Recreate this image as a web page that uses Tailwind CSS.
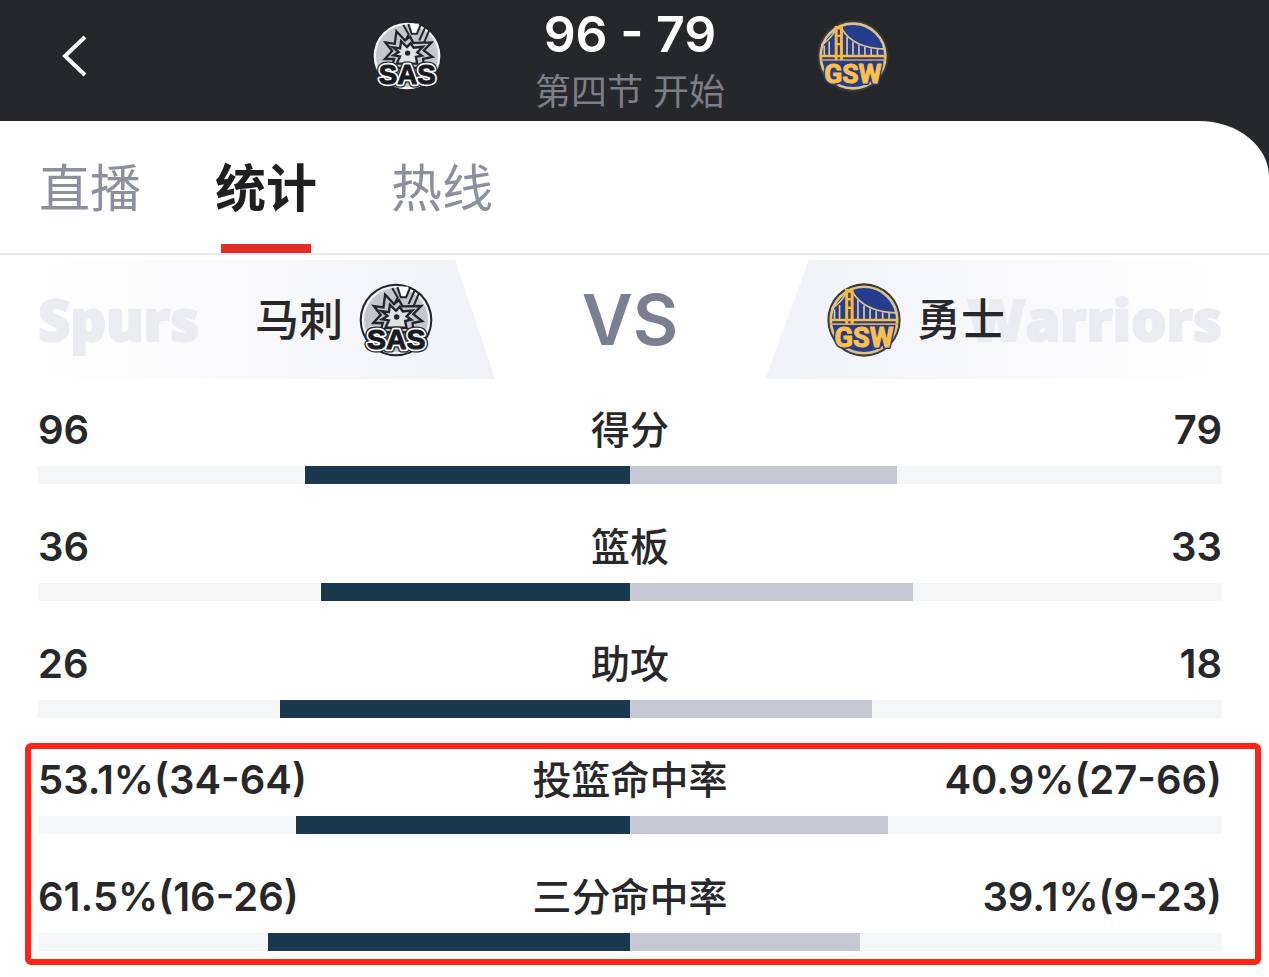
<!DOCTYPE html>
<html lang="zh-CN">
<head>
    <meta charset="UTF-8">
    <meta name="viewport" content="width=device-width, initial-scale=1.0">
    <title>马刺 96 - 79 勇士</title>
    <script src="https://cdn.jsdelivr.net/npm/@tailwindcss/browser@4"></script>
</head>
<body class="bg-white text-[#28282a] font-['Inter','Noto_Sans_CJK_SC',sans-serif]">

    <!-- Logo sprites -->
    <svg class="hidden" aria-hidden="true">
        <symbol id="logo-sas" viewBox="0 0 218 218">
            <circle cx="109" cy="109" r="107" fill="#22252c"/>
            <circle cx="109" cy="109" r="101" fill="#f4f5f6"/>
            <circle cx="109" cy="109" r="94" fill="#c3c6ca"/>
            <!-- fork -->
            <path d="M119 10 L124 38 L138 38 L146 11 Z" fill="#fff"/>
            <path d="M98 15 L114 43 L106 58 M113 12 L123 42 L139 42 L151 13 M165 20 L146 62 M177 29 L160 70" fill="none" stroke="#22252c" stroke-width="6"/>
            <!-- star -->
            <path d="M44 68 L72 72 L77 34 L103 62 L118 50 L128 69 L183 68 L160 92 L186 112 L158 118 L160 145 L62 145 L70 118 L42 118 L64 94 Z" fill="#c3c6ca" stroke="#22252c" stroke-width="7"/>
            <path d="M67 83 L88 86 L91 64 L109 82 L120 70 L129 84 L157 81 L140 98 L154 108 L136 112 L140 132 L78 132 L88 110 L68 107 L84 97 Z" fill="#e2e3e5" stroke="#22252c" stroke-width="7"/>
            <circle cx="111" cy="100" r="8" fill="#22252c"/>
            <g font-family="Liberation Sans" font-weight="700" font-size="84" text-anchor="middle" stroke-linejoin="round">
                <text x="110" y="194" fill="#22252c" stroke="#22252c" stroke-width="21">SAS</text>
                <text x="110" y="194" fill="#171a22" stroke="#fff" stroke-width="13">SAS</text>
                <text x="110" y="194" fill="#171a22" stroke="#171a22" stroke-width="3">SAS</text>
            </g>
        </symbol>
        <symbol id="logo-gsw" viewBox="0 0 218 218">
            <circle cx="109" cy="109" r="108" fill="#37393f"/>
            <circle cx="109" cy="109" r="98" fill="#263c8c" stroke="#dcc486" stroke-width="8"/>
            <!-- bridge cables and hangers -->
            <g fill="none" stroke="#dcc992" stroke-width="5">
                <path d="M75 26 Q109 85 205 88"/>
                <path d="M57 28 Q43 57 13 76"/>
                <path d="M22 78 V106 M37 65 V106 M91 50 V106 M109 66 V106 M127 75 V106 M145 82 V106 M164 86 V106 M183 88 V106"/>
            </g>
            <path d="M9 109 H209" stroke="#f5bd43" stroke-width="7"/>
            <path d="M9 121 H209" stroke="#d9a957" stroke-width="5"/>
            <path d="M58 18 V121 M74 18 V121" stroke="#fbb936" stroke-width="9"/>
            <path d="M58 25 H74 M58 48 H74 M58 73 H74" stroke="#fbb936" stroke-width="7"/>
            <g font-family="Liberation Sans Narrow, Roboto" font-weight="700" font-size="80" text-anchor="middle" stroke-linejoin="round">
                <text x="109" y="190" fill="#263c8c" stroke="#263c8c" stroke-width="12">GSW</text>
                <text x="109" y="190" fill="#ffc04a" stroke="#ffc04a" stroke-width="3">GSW</text>
            </g>
        </symbol>
    </svg>

    <!-- Score header -->
    <div class="bg-[#26272b]">
        <header class="grid grid-cols-[1fr_374px_1fr] items-center pl-[38px] pr-[47px] pt-[5px]">
            <div class="flex items-center justify-between pb-[14px]">
                <button type="button" aria-label="返回" class="p-4 text-white">
                    <svg class="w-10 h-12" viewBox="0 0 40 48" fill="none" stroke="currentColor" stroke-width="4">
                        <path d="M31 5 L11 24 L31 43"/>
                    </svg>
                </button>
                <svg class="size-[72px]" role="img" aria-label="SAS"><use href="#logo-sas"/></svg>
            </div>
            <div class="text-center">
                <h1 class="text-[50px] leading-[58px] font-semibold text-white">96 - 79</h1>
                <p class="text-[36px] leading-[58px] text-[#7d7e88]">第四节 开始</p>
            </div>
            <div class="pb-[14px]">
                <svg class="size-[72px]" role="img" aria-label="GSW"><use href="#logo-gsw"/></svg>
            </div>
        </header>

        <!-- Tabs -->
        <nav class="flex gap-[74px] h-[134px] px-[39px] bg-white border-b-2 border-[#e9e9ea] rounded-tr-[70px_56px] text-[51px] leading-[136px] text-[#8c8f9e]">
            <a href="#live">直播</a>
            <a href="#stats" class="relative font-bold text-[#1f1f21]" aria-current="page">
                统计
                <span class="absolute bottom-0 inset-x-[6px] h-[9px] bg-[#e52b26]"></span>
            </a>
            <a href="#hotline">热线</a>
        </nav>
    </div>

    <main id="stats">
        <!-- Teams -->
        <section class="grid grid-cols-[1fr_270px_1fr] items-center pl-[38px] pr-[47px] pt-[5px] text-[44px] font-medium">
            <div class="relative flex items-center justify-end gap-4 h-[119px] pr-[62px] bg-linear-to-r from-white to-[#f1f2f7] [clip-path:polygon(0_0,calc(100%-40px)_0,100%_100%,0_100%)]">
                <span class="absolute left-0 top-[21px] font-['Open_Sans'] font-extrabold text-[56px] leading-[76px] text-[#ebecf2] [-webkit-text-stroke:2px_#ebecf2]">Spurs</span>
                <span class="relative">马刺</span>
                <svg class="relative size-[74px]" role="img" aria-label="SAS"><use href="#logo-sas"/></svg>
            </div>
            <div class="text-center text-[70px] leading-[119px] font-semibold text-[#7c7f93]">VS</div>
            <div class="relative flex items-center gap-4 h-[119px] pl-[62px] bg-linear-to-l from-white to-[#f1f2f7] [clip-path:polygon(44px_0,100%_0,100%_100%,0_100%)]">
                <span class="absolute right-0 top-[21px] font-['Open_Sans'] font-extrabold text-[56px] leading-[76px] text-[#ebecf2] [-webkit-text-stroke:2px_#ebecf2]">Warriors</span>
                <svg class="relative size-[74px]" role="img" aria-label="GSW"><use href="#logo-gsw"/></svg>
                <span class="relative">勇士</span>
            </div>
        </section>

        <!-- Team stats -->
        <section class="flex flex-col gap-[34px] pl-[38px] pr-[47px] pt-[22px] text-[40px] leading-[58px] font-semibold">
            <div>
                <div class="grid grid-cols-[1fr_auto_1fr]">
                    <span>96</span>
                    <span class="text-[39px] font-medium">得分</span>
                    <span class="text-right">79</span>
                </div>
                <div class="grid grid-cols-2 h-[18px] mt-[7px] bg-[#f5f6f8]">
                    <div class="bg-[#1b394e] justify-self-end" style="width: 54.9%"></div>
                    <div class="bg-[#c6c8d4]" style="width: 45.1%"></div>
                </div>
            </div>
            <div>
                <div class="grid grid-cols-[1fr_auto_1fr]">
                    <span>36</span>
                    <span class="text-[39px] font-medium">篮板</span>
                    <span class="text-right">33</span>
                </div>
                <div class="grid grid-cols-2 h-[18px] mt-[7px] bg-[#f5f6f8]">
                    <div class="bg-[#1b394e] justify-self-end" style="width: 52.2%"></div>
                    <div class="bg-[#c6c8d4]" style="width: 47.8%"></div>
                </div>
            </div>
            <div>
                <div class="grid grid-cols-[1fr_auto_1fr]">
                    <span>26</span>
                    <span class="text-[39px] font-medium">助攻</span>
                    <span class="text-right">18</span>
                </div>
                <div class="grid grid-cols-2 h-[18px] mt-[7px] bg-[#f5f6f8]">
                    <div class="bg-[#1b394e] justify-self-end" style="width: 59.1%"></div>
                    <div class="bg-[#c6c8d4]" style="width: 40.9%"></div>
                </div>
            </div>
        </section>

        <!-- Shooting, highlighted -->
        <section class="flex flex-col gap-[34px] ml-[25px] mr-2 mt-[25px] mb-3 pl-[7px] pr-[33px] pt-[2px] pb-[8px] border-6 border-[#fb2416] rounded-md text-[40px] leading-[58px] font-semibold">
            <div>
                <div class="grid grid-cols-[1fr_auto_1fr]">
                    <span>53.1%(34-64)</span>
                    <span class="text-[39px] font-medium">投篮命中率</span>
                    <span class="text-right">40.9%(27-66)</span>
                </div>
                <div class="grid grid-cols-2 h-[18px] mt-[7px] bg-[#f5f6f8]">
                    <div class="bg-[#1b394e] justify-self-end" style="width: 56.5%"></div>
                    <div class="bg-[#c6c8d4]" style="width: 43.5%"></div>
                </div>
            </div>
            <div>
                <div class="grid grid-cols-[1fr_auto_1fr]">
                    <span>61.5%(16-26)</span>
                    <span class="text-[39px] font-medium">三分命中率</span>
                    <span class="text-right">39.1%(9-23)</span>
                </div>
                <div class="grid grid-cols-2 h-[18px] mt-[7px] bg-[#f5f6f8]">
                    <div class="bg-[#1b394e] justify-self-end" style="width: 61.1%"></div>
                    <div class="bg-[#c6c8d4]" style="width: 38.9%"></div>
                </div>
            </div>
        </section>
    </main>
</body>
</html>
